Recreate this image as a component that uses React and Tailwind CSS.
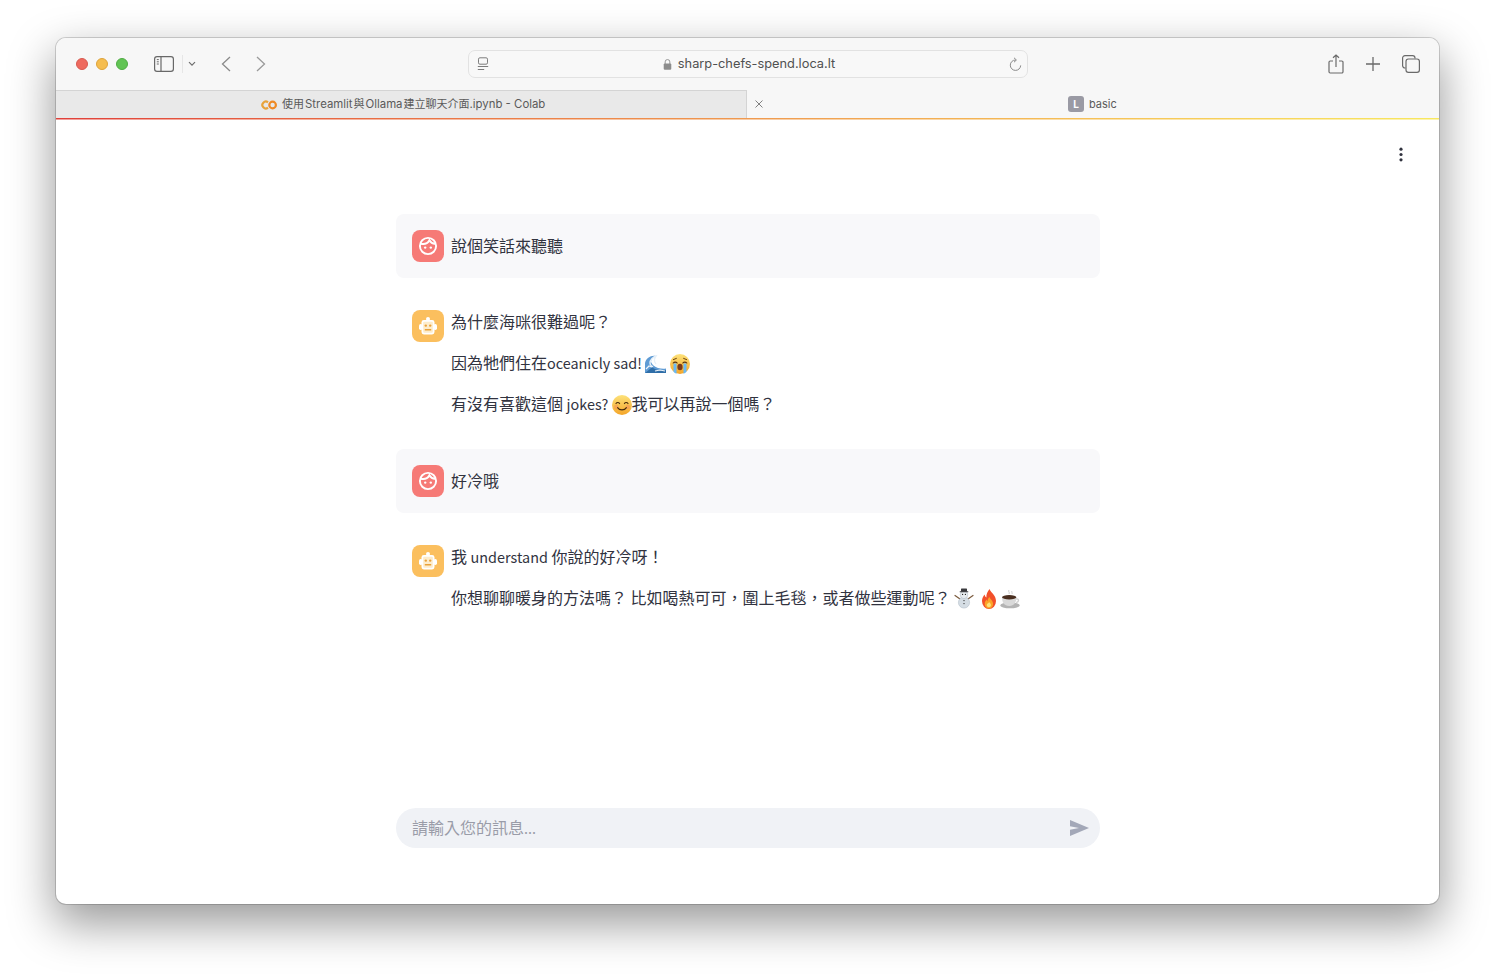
import React from "react";

const CJK = "font-['Noto_Sans_CJK_TC','Noto_Sans',sans-serif]";

function Face() {
  return (
    <svg width="20" height="20" viewBox="0 0 20 20" fill="none" stroke="#fff" strokeWidth="1.900">
      <circle cx="10" cy="10" r="8.100" />
      <path d="M3 7.800c3 .6 6.600-.2 8.400-3.600 1.200 2 3 3.400 5.600 3.600" strokeLinecap="round" />
      <circle cx="7.200" cy="11.600" r="1.200" fill="#fff" stroke="none" />
      <circle cx="12.800" cy="11.600" r="1.200" fill="#fff" stroke="none" />
    </svg>
  );
}

function Robot() {
  return (
    <svg width="20" height="20" viewBox="0 0 20 20">
      <rect x="8" y="1" width="4" height="4" rx="2" fill="#fff" />
      <rect x="1" y="8" width="3.500" height="6" rx="1.700" fill="#fff" />
      <rect x="15.500" y="8" width="3.500" height="6" rx="1.700" fill="#fff" />
      <rect x="3.500" y="4" width="13" height="14.500" rx="2.400" fill="#fff" />
      <rect x="5.200" y="5.700" width="9.600" height="11.100" rx="1" fill="#fdeccb" />
      <rect x="6.600" y="8.400" width="2.400" height="2.400" rx="1.200" fill="#e9a23b" />
      <rect x="11" y="8.400" width="2.400" height="2.400" rx="1.200" fill="#e9a23b" />
      <rect x="6.800" y="13" width="6.400" height="1.500" fill="#e9a23b" />
    </svg>
  );
}

function Avatar({ kind }) {
  return (
    <div className={`w-8 h-8 shrink-0 rounded-lg flex items-center justify-center ${kind === "user" ? "bg-[#f67a76]" : "bg-[#fbbf5e]"}`}>
      {kind === "user" ? <Face /> : <Robot />}
    </div>
  );
}

const em = "inline-block align-[-5px]";
const L = ({ children }) => <span className="text-[14.400px]">{children}</span>;

const Wave = () => (
  <svg className={em} width="21" height="20" viewBox="0 0 21 20">
    <path d="M0 19V9c1-5 6-8 11-7-3 1-5 3-5 6 1 3 4 5 7 6 3 .8 5 1 8 .6V19z" fill="#5f9bd4" />
    <path d="M5 9c0-3 3-6 6-7-2 3-2 6 0 8M8 13c-2-1-3-2-3-4" fill="none" stroke="#e6f0f8" strokeWidth="1.400" />
    <path d="M0 19c4-3 6-5 7-6 3 3 8 4 14 3v3z" fill="#2f6ea8" />
    <path d="M1 15l3-3 3 1M10 17l5-1 5 1" fill="none" stroke="#eef4fa" strokeWidth="1.200" />
  </svg>
);
const Cry = () => (
  <svg className={em} width="20" height="20" viewBox="0 0 20 20">
    <defs>
      <linearGradient id="cg" x1="0" y1="0" x2="0" y2="1">
        <stop offset="0" stopColor="#fde27a" />
        <stop offset="1" stopColor="#f4a528" />
      </linearGradient>
    </defs>
    <circle cx="10" cy="10" r="10" fill="url(#cg)" />
    <path d="M3.400 5.600l3-1.200M16.600 5.600l-3-1.200" stroke="#6b4210" strokeWidth="1" strokeLinecap="round" />
    <path d="M3.500 9.500h3v10.200a10 10 0 0 1-3-2zM16.500 9.500h-3v10.200a10 10 0 0 0 3-2z" fill="#6ab9f4" />
    <ellipse cx="10" cy="13" rx="2.600" ry="3.200" fill="#7a3a18" />
    <path d="M3.200 9c1-1.200 3-1.200 4 0M12.800 9c1-1.200 3-1.200 4 0" fill="none" stroke="#5b3410" strokeWidth="1.100" strokeLinecap="round" />
  </svg>
);
const Smile = () => (
  <svg className={em} width="20" height="20" viewBox="0 0 20 20">
    <defs>
      <linearGradient id="sg" x1="0" y1="0" x2="0" y2="1">
        <stop offset="0" stopColor="#fde27a" />
        <stop offset="1" stopColor="#f4a528" />
      </linearGradient>
    </defs>
    <circle cx="10" cy="10" r="10" fill="url(#sg)" />
    <circle cx="4.200" cy="12" r="2.200" fill="#f58b5c" opacity=".5" />
    <circle cx="15.800" cy="12" r="2.200" fill="#f58b5c" opacity=".5" />
    <path d="M4 8.600c.8-1.400 2.800-1.400 3.600 0M12.400 8.600c.8-1.400 2.800-1.400 3.600 0" fill="none" stroke="#4a2c0c" strokeWidth="1.100" strokeLinecap="round" />
    <path d="M5.600 12.600c1.800 3 7 3 8.800 0" fill="none" stroke="#4a2c0c" strokeWidth="1.100" strokeLinecap="round" />
  </svg>
);
const Snowman = () => (
  <svg className={em} width="20" height="21" viewBox="0 0 20 21">
    <path d="M1 7.500l5 3.500M19 7.500l-5 3.500" stroke="#7a5a3c" strokeWidth="1.200" strokeLinecap="round" />
    <circle cx="10" cy="14.500" r="5.600" fill="#d5dde4" stroke="#aab7c2" strokeWidth=".5" />
    <circle cx="10" cy="6.800" r="3.800" fill="#e8edf1" stroke="#aab7c2" strokeWidth=".5" />
    <rect x="7" y="0.500" width="6" height="3.200" rx=".6" fill="#3a3a3e" />
    <rect x="5.600" y="3.200" width="8.800" height="1.100" rx=".5" fill="#3a3a3e" />
    <circle cx="8.600" cy="6.400" r=".6" fill="#222" />
    <circle cx="11.400" cy="6.400" r=".6" fill="#222" />
    <circle cx="10" cy="12.600" r=".7" fill="#333" />
    <circle cx="10" cy="15.600" r=".7" fill="#333" />
  </svg>
);
const Fire = () => (
  <svg className={`${em} ml-[1px]`} width="20" height="20" viewBox="0 0 20 20">
    <path d="M10.500 0c1 3.500 6.500 6 6.500 12a7 8 0 0 1-14 0c0-3 1.400-4.600 2.600-6.400.3 1.600.9 2.400 1.800 3C7 5.400 8.600 2.400 10.500 0z" fill="#f2502a" />
    <path d="M10.500 8c.4 2 3.600 3.400 3.600 7a4.200 4.600 0 0 1-8.400 0c0-2.400 1.200-3 1.800-4.400.3.900.6 1.300 1.100 1.600C8.600 10.600 9.400 9 10.500 8z" fill="#fba328" />
    <path d="M10.200 13c.3 1 1.800 1.600 1.800 3.200a2.200 2.600 0 0 1-4.300 0c0-1.400 1.600-1.800 2.500-3.200z" fill="#fde27a" />
  </svg>
);
const Coffee = () => (
  <svg className={`${em} ml-[1px]`} width="20" height="20" viewBox="0 0 20 20">
    <path d="M9 1c-1.400 1.400 1.200 2.400 0 4M12 2c-1 1 .8 1.800 0 3" fill="none" stroke="#c8c8c8" strokeWidth=".9" />
    <ellipse cx="10" cy="16.400" rx="9.800" ry="2.900" fill="#b4b4b4" />
    <path d="M2 8.200h14.400c0 4.800-2.200 8.800-7.200 8.800S2 13 2 8.200z" fill="#d9d9d9" />
    <ellipse cx="9.200" cy="8.300" rx="7.200" ry="2.200" fill="#4a2f20" />
    <path d="M16 10c3-.8 3.600 2.600.2 3.600" fill="none" stroke="#cfcfcf" strokeWidth="1.300" />
  </svg>
);

function UserMsg({ children }) {
  return (
    <div className="bg-[#f8f8fa] rounded-lg p-4 flex items-center gap-[7px] h-16">
      <Avatar kind="user" />
      <p className="text-[16px] leading-[25.600px] text-[#31333f]">{children}</p>
    </div>
  );
}

function BotMsg({ lines }) {
  return (
    <div className="flex gap-[7px] p-4">
      <Avatar kind="bot" />
      <div className="flex flex-col gap-[15.400px] -mt-[1px] text-[16px] leading-[25.600px] text-[#31333f]">
        {lines.map((l, i) => (
          <p key={i} className="whitespace-nowrap">{l}</p>
        ))}
      </div>
    </div>
  );
}

export default function App() {
  return (
    <div className={`w-[1495px] h-[978px] bg-white pl-[56px] pt-[38px] overflow-hidden ${CJK}`}>
      <div className="w-[1383px] h-[866px] rounded-[10px] bg-white shadow-[0_18px_46px_2px_rgba(0,0,0,0.40),0_0_0_1px_rgba(0,0,0,0.16)] overflow-hidden flex flex-col">
        {/* toolbar */}
        <div className="h-[52px] shrink-0 bg-[#f7f7f7] flex items-center">
          <div className="flex items-center gap-2 ml-[20px]">
            <span className="w-3 h-3 rounded-full bg-[#ee6a5f] border border-[#d85a50]" />
            <span className="w-3 h-3 rounded-full bg-[#f5bd4f] border border-[#dea33a]" />
            <span className="w-3 h-3 rounded-full bg-[#61c454] border border-[#50ac44]" />
          </div>
          <svg className="ml-[26px]" width="20" height="16" viewBox="0 0 20 16" fill="none" stroke="#686868" strokeWidth="1.200">
            <rect x=".6" y=".6" width="18.800" height="14.800" rx="2.400" />
            <path d="M7 .6v14.800" />
            <path d="M2.800 3.600h2M2.800 5.800h2M2.800 8h2" strokeWidth="1" />
          </svg>
          <div className="w-px h-[18px] bg-[#e6e6e6] ml-[8px]" />
          <svg className="ml-[5px]" width="8" height="6" viewBox="0 0 8 6" fill="none" stroke="#6e6e6e" strokeWidth="1.200">
            <path d="M1 1.200l3 3 3-3" />
          </svg>
          <svg className="ml-[24px]" width="12" height="16" viewBox="0 0 12 16" fill="none" stroke="#8a8a8a" strokeWidth="1.300">
            <path d="M10 1L2.500 8 10 15" />
          </svg>
          <svg className="ml-[23px]" width="12" height="16" viewBox="0 0 12 16" fill="none" stroke="#9a9a9a" strokeWidth="1.300">
            <path d="M2 1l7.500 7L2 15" />
          </svg>
          {/* address */}
          <div className="ml-[201px] w-[560px] h-[28px] rounded-[7px] border border-[#e2e2e2] bg-[#f8f8f8] flex items-center relative">
            <svg className="ml-[8px]" width="12" height="14" viewBox="0 0 12 14" fill="none" stroke="#7c7c7c" strokeWidth="1">
              <rect x="1.500" y=".8" width="9" height="6.400" rx="1.400" />
              <path d="M.8 9.500h10.400M.8 12.500h6.400" />
            </svg>
            <div className="absolute inset-0 flex items-center justify-center pl-[2px] pt-[1px]">
              <svg className="mr-[6px]" width="9" height="13" viewBox="0 0 10 13">
                <path d="M2.400 6V3.600a2.600 2.600 0 0 1 5.200 0V6" fill="none" stroke="#8c8c8c" strokeWidth="1" />
                <rect x=".8" y="5.400" width="8.400" height="7" rx="1.200" fill="#8c8c8c" />
              </svg>
              <span className="font-['Inter',sans-serif] text-[12.800px] text-[#505050] leading-none">sharp-chefs-spend.loca.lt</span>
            </div>
            <svg className="ml-auto mr-[5px]" width="13" height="15" viewBox="0 0 13 15" fill="none" stroke="#8a8a8a" strokeWidth="1">
              <path d="M6.500 3a5.200 5.200 0 1 0 5.200 5.400" />
              <path d="M5 .8l2.400 2.200L5 5.200" />
            </svg>
          </div>
          {/* right */}
          <svg className="ml-[300px]" width="16" height="20" viewBox="0 0 16 20" fill="none" stroke="#6a6a6a" strokeWidth="1.200">
            <path d="M5 7H2.200A1.200 1.200 0 0 0 1 8.200v9.600A1.200 1.200 0 0 0 2.200 19h11.600a1.200 1.200 0 0 0 1.200-1.200V8.200A1.200 1.200 0 0 0 13.800 7H11" />
            <path d="M8 13V1M5 3.800 8 1l3 2.800" />
          </svg>
          <svg className="ml-[22px]" width="14" height="14" viewBox="0 0 14 14" stroke="#6a6a6a" strokeWidth="1.300">
            <path d="M7 0v14M0 7h14" />
          </svg>
          <svg className="ml-[22px]" width="18" height="18" viewBox="0 0 18 18" fill="none" stroke="#6a6a6a" strokeWidth="1.200">
            <path d="M3.500 13H3a2.400 2.400 0 0 1-2.400-2.400V3A2.400 2.400 0 0 1 3 .6h7.600A2.400 2.400 0 0 1 13 3v.5" />
            <rect x="4" y="4" width="13.400" height="13.400" rx="2.400" />
          </svg>
        </div>
        {/* tabs */}
        <div className="h-[28px] shrink-0 flex bg-[#f7f7f7] font-['Inter','Noto_Sans_CJK_TC',sans-serif] text-[11px] text-[#5a5a5a]">
          <div className="w-[691px] bg-[#e9e9e9] border-t border-r border-[#d4d4d4] flex items-center pl-[205px] gap-[5px]">
            <svg width="16" height="10" viewBox="0 0 16 10" fill="none" strokeWidth="2.200">
              <path d="M7 2.400a3.400 3.400 0 1 0 0 5.200" stroke="#e8a33a" />
              <circle cx="11.600" cy="5" r="3.300" stroke="#ef8a25" />
            </svg>
            <span className="whitespace-nowrap">
              使用<span className="ml-[1px] mr-[1px] text-[11.400px]">Streamlit</span>與<span className="ml-[1px] mr-[1px] text-[11.400px]">Ollama</span>建立聊天介面<span className="text-[11.400px]">.ipynb - Colab</span>
            </span>
          </div>
          <div className="flex-1 flex items-center relative pl-[321px] gap-[5px]">
            <svg className="absolute left-[8px] top-[10px]" width="8" height="8" viewBox="0 0 8 8" stroke="#808080" strokeWidth="1">
              <path d="M.5.500l7 7M7.500.500l-7 7" />
            </svg>
            <span className="w-4 h-4 rounded-[3px] bg-[#9a9aa4] text-white text-[10px] font-bold flex items-center justify-center">L</span>
            <span>basic</span>
          </div>
        </div>
        <div className="h-px shrink-0 bg-gradient-to-r from-[#e0403a] via-[#ef9a50] to-[#f8e860]" />
        <div className="h-px shrink-0 opacity-50 bg-gradient-to-r from-[#e0403a] via-[#ef9a50] to-[#f8e860]" />
        {/* content */}
        <div className="flex-1 relative flex flex-col items-center">
          <svg className="absolute right-[36px] top-[27px]" width="4" height="15" viewBox="0 0 4 15" fill="#31333f">
            <circle cx="2" cy="2.200" r="1.600" />
            <circle cx="2" cy="7.500" r="1.600" />
            <circle cx="2" cy="12.800" r="1.600" />
          </svg>
          <div className="w-[704px] ml-[1px] pt-[94px] flex flex-col gap-4">
            <UserMsg>說個笑話來聽聽</UserMsg>
            <BotMsg
              lines={[
                "為什麼海咪很難過呢？",
                <>因為牠們住在<L>oceanicly sad! </L><Wave /> <Cry /></>,
                <>有沒有喜歡這個 <L>jokes? </L><Smile />我可以再說一個嗎？</>,
              ]}
            />
            <UserMsg>好冷哦</UserMsg>
            <BotMsg
              lines={[
                <>我 <L>understand</L> 你說的好冷呀！</>,
                <>你想聊聊暖身的方法嗎？ 比如喝熱可可，圍上毛毯，或者做些運動呢？ <Snowman /> <Fire /><Coffee /></>,
              ]}
            />
          </div>
          <div className="absolute left-[340px] top-[688px] w-[704px] h-10 rounded-full bg-[#f0f2f6] flex items-center pl-[16px] pr-[11px]">
            <span className="text-[16px] leading-[24px] -mt-[1px] text-[#9a9ca8]">請輸入您的訊息<L>...</L></span>
            <svg className="ml-auto" width="19" height="16" viewBox="0 0 19 16" fill="#a3a8b8">
              <path d="M0 16V9.800L9 8 0 6.200V0l19 8z" />
            </svg>
          </div>
        </div>
      </div>
    </div>
  );
}
